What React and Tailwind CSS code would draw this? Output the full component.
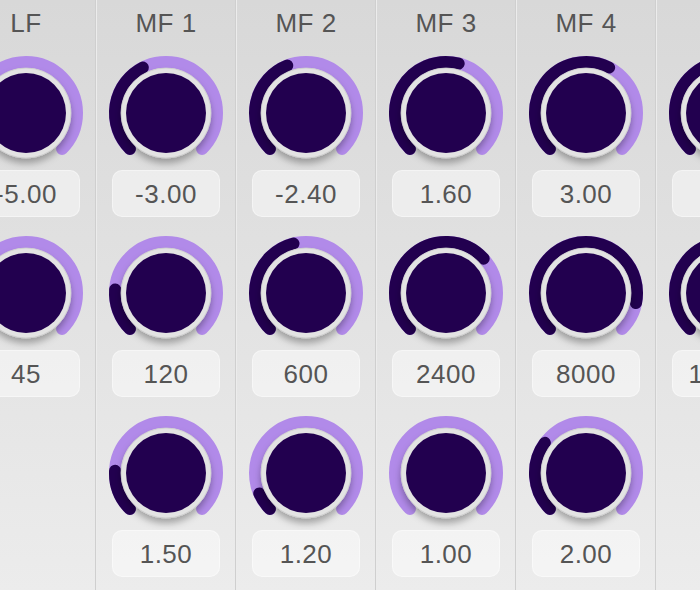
import React, { useId } from "react";

// eq bands, fractions are computed from the value ranges below
const bands = [
  { name: "LF", gain: -5, freq: 45, q: null },
  { name: "MF 1", gain: -3, freq: 120, q: 1.5 },
  { name: "MF 2", gain: -2.4, freq: 600, q: 1.2 },
  { name: "MF 3", gain: 1.6, freq: 2400, q: 1.0 },
  { name: "MF 4", gain: 3, freq: 8000, q: 2.0 },
  { name: "HF", gain: 6, freq: 12000, q: null },
];

const gainFrac = (g) => (g + 15) / 30;
const freqFrac = (f) => Math.max(0, Math.log10(f / 40) / Math.log10(17000 / 40));
const qFrac = (q) => Math.log10(q);

function pt(angle, r) {
  const a = (angle * Math.PI) / 180;
  return [60 + r * Math.sin(a), 60 - r * Math.cos(a)];
}

function arcPath(from, to, r) {
  const [x1, y1] = pt(from, r);
  const [x2, y2] = pt(to, r);
  const large = to - from > 180 ? 1 : 0;
  return `M ${x1} ${y1} A ${r} ${r} 0 ${large} 1 ${x2} ${y2}`;
}

function Knob({ frac }) {
  const id = useId().replace(/:/g, "");
  const end = -135 + 270 * frac;
  return (
    <svg width="120" height="120" viewBox="0 0 120 120" className="block -mb-[3px]">
      <defs>
        <filter id={"sh" + id} x="-30%" y="-30%" width="160%" height="170%">
          <feDropShadow dx="0" dy="5" stdDeviation="3.5" floodColor="#000" floodOpacity="0.3" />
        </filter>
      </defs>
      <path d={arcPath(-135, 135, 51)} fill="none" stroke="#b18ae9" strokeWidth="12" strokeLinecap="round" />
      {frac > 0.005 && (
        <path d={arcPath(-135, end, 51)} fill="none" stroke="#22004f" strokeWidth="12" strokeLinecap="round" />
      )}
      <circle cx="60" cy="60" r="45" fill="#e3e3e3" stroke="#cdcdcd" strokeWidth="0.8" filter={`url(#sh${id})`} />
      <circle cx="60" cy="60" r="40" fill="#22004f" />
    </svg>
  );
}

function Value({ text }) {
  return (
    <div className="w-[108px] h-[47px] rounded-[10px] bg-white/45 border border-white/40 flex items-center justify-center text-[26px] leading-none tracking-[0.5px] text-[#555]">
      {text}
    </div>
  );
}

function Band({ band }) {
  return (
    <div className="w-[140px] shrink-0 flex flex-col items-center border-l border-[#ececec] border-r border-r-[#cfcfcf]">
      <div className="h-[53px] pt-[10px] text-[26px] leading-none tracking-[0.5px] text-[#555]">{band.name}</div>
      <div className="flex flex-col items-center gap-[16px]">
        <div className="flex flex-col items-center">
          <Knob frac={gainFrac(band.gain)} />
          <Value text={band.gain.toFixed(2)} />
        </div>
        <div className="flex flex-col items-center">
          <Knob frac={freqFrac(band.freq)} />
          <Value text={String(band.freq)} />
        </div>
        {band.q !== null && (
          <div className="flex flex-col items-center">
            <Knob frac={qFrac(band.q)} />
            <Value text={band.q.toFixed(2)} />
          </div>
        )}
      </div>
    </div>
  );
}

export default function App() {
  return (
    <div
      className="w-[700px] h-[590px] overflow-hidden bg-gradient-to-b from-[#d8d8d8] to-[#ececec]"
      style={{ fontFamily: '"Liberation Sans", Arial, sans-serif' }}
    >
      <div className="flex h-full ml-[-44px]">
        {bands.map((b) => (
          <Band key={b.name} band={b} />
        ))}
      </div>
    </div>
  );
}
